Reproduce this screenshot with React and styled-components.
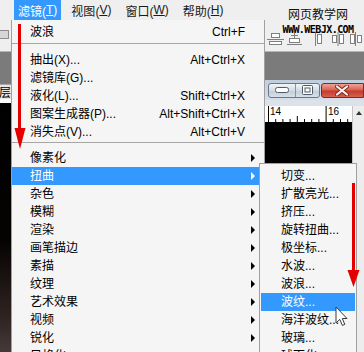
import React from 'react';
import styled, { createGlobalStyle } from 'styled-components';

const Global = createGlobalStyle`
  *, *::before, *::after { box-sizing: border-box; }
  html, body { margin: 0; padding: 0; background: #fff; }
  body { font-family: "Liberation Sans", "Noto Sans CJK SC", sans-serif; }
`;

const Screen = styled.div`
  position: relative;
  width: 364px;
  height: 352px;
  overflow: hidden;
  display: flex;
  flex-direction: column;
  background: #7b7b7b;
  font-family: "Liberation Sans", "Noto Sans CJK SC", sans-serif;
  font-size: 12px;
  color: #000;
`;

/* ---------- menubar ---------- */
const MenuBar = styled.div`
  flex: none;
  height: 20px;
  display: flex;
  align-items: stretch;
  gap: 6px;
  padding-left: 14px;
  background: #efefef;
`;

const BarItem = styled.div`
  display: flex;
  align-items: center;
  padding: 0 4px;
  white-space: nowrap;
  background: ${p => (p.$active ? '#3399ff' : 'transparent')};
  color: ${p => (p.$active ? '#fff' : '#1a1a1a')};
  u { text-decoration: underline; text-underline-offset: 1px; }
`;

/* ---------- toolbar ---------- */
const Toolbar = styled.div`
  flex: none;
  height: 32px;
  display: flex;
  justify-content: space-between;
  background: #efefef;
  border-bottom: 1px solid #b4b4b4;
`;

const Swatch = styled.div`
  width: 9px;
  height: 9px;
  margin-top: 10px;
  border: 1px solid #8c8c8c;
  border-left: none;
  background: #d6d6d6;
`;

const ToolIcons = styled.div`
  width: 99px;
  display: flex;
  align-items: flex-start;
  padding: 12px 0 0 2px;
  gap: 3px;
`;

const Watermark = styled.div`
  position: absolute;
  left: 282px;
  top: 8px;
  width: 72px;
  display: flex;
  flex-direction: column;
  align-items: center;
  gap: 5px;
  pointer-events: none;
`;

const WmTitle = styled.div`
  font-family: "Noto Sans CJK SC", sans-serif;
  font-size: 12px;
  line-height: 12px;
  color: #111;
`;

const WmUrl = styled.div`
  font-family: "DejaVu Sans Mono", monospace;
  font-weight: bold;
  font-size: 10px;
  line-height: 9px;
  letter-spacing: -0.55px;
  color: #000;
`;

/* ---------- workspace ---------- */
const Workspace = styled.div`
  flex: 1;
  display: flex;
  min-height: 0;
`;

const LeftPane = styled.div`
  width: 11px;
  display: flex;
  flex-direction: column;
`;

const PaneGray = styled.div`
  height: 32px;
  background: #7b7b7b;
`;

const PaneTab = styled.div`
  height: 15px;
  background: #e6e6e6;
  border-top: 1px solid #a8a8a8;
  display: flex;
  justify-content: flex-end;
  overflow: hidden;
  font-family: "Noto Sans CJK SC", sans-serif;
  font-size: 12px;
  line-height: 14px;
  white-space: nowrap;
`;

const PaneRule = styled.div`
  height: 4px;
  background: #fafafa;
`;

const PaneCanvas = styled.div`
  flex: 1;
  background: linear-gradient(#000 0%, #050302 55%, #2e2220 85%, #45393a 100%);
`;

const Middle = styled.div`
  flex: 1;
  background: #7b7b7b;
`;

const DocWindow = styled.div`
  width: 99px;
  margin-top: 28px;
  display: flex;
  flex-direction: column;
  background: #d6dee8;
`;

const TitleBar = styled.div`
  flex: none;
  height: 20px;
  display: flex;
  align-items: center;
  padding-left: 3px;
  background: linear-gradient(#bfcddd, #d5dfea);
`;

const CtrlGroup = styled.div`
  display: flex;
  height: 15px;
  border: 1px solid #67778c;
  border-radius: 3px;
  overflow: hidden;
  background: linear-gradient(#f2f5f8, #d3dbe4 50%, #c1ccd8 51%, #d8e0e8);
`;

const CtrlBtn = styled.div`
  width: ${p => p.$w}px;
  display: flex;
  align-items: center;
  justify-content: center;
  & + & { border-left: 1px solid #8593a4; }
`;

const CloseBtn = styled.div`
  width: 44px;
  height: 15px;
  margin-left: 1px;
  border: 1px solid #7c2a22;
  border-radius: 3px 0 0 3px;
  background: linear-gradient(#eea597, #d9604f 48%, #c53a2b 52%, #d8604f);
  display: flex;
  align-items: center;
  justify-content: center;
`;

const FrameGap = styled.div`
  flex: none;
  height: 6px;
  background: #dbe2ea;
`;

const RulerRow = styled.div`
  flex: none;
  height: 17px;
  display: flex;
`;

const Ruler = styled.div`
  flex: 1;
  background: #fff;
  border-bottom: 1px solid #000;
  svg { display: block; }
`;

const ScrollCol = styled.div`
  width: 12px;
  background: #ededed;
  border-left: 1px solid #c4c4c4;
  display: flex;
  justify-content: center;
  padding-top: ${p => (p.$top ? '5px' : '0')};
`;

const UpArrow = styled.div`
  width: 0;
  height: 0;
  border-left: 3.5px solid transparent;
  border-right: 3.5px solid transparent;
  border-bottom: 4px solid #333;
`;

const CanvasRow = styled.div`
  flex: 1;
  display: flex;
`;

const Canvas = styled.div`
  flex: 1;
  background: #000;
`;

/* ---------- menus ---------- */
const MainMenu = styled.div`
  position: absolute;
  left: 11px;
  top: 20px;
  width: 254px;
  padding-top: 3px;
  border: 1px solid #a0a0a0;
  border-top: none;
  background: #f5f5f5;
`;

const Row = styled.div`
  display: grid;
  grid-template-columns: 1fr auto 19px;
  align-items: center;
  height: 18px;
  padding-left: 18px;
  white-space: nowrap;
  line-height: 18px;
  background: ${p => (p.$active ? '#3399ff' : 'transparent')};
  color: ${p => (p.$active ? '#fff' : '#000')};
`;

const Label = styled.span`
  font-family: "Liberation Sans", "Noto Sans CJK SC", sans-serif;
`;

const Shortcut = styled.span``;

const ArrowCell = styled.span`
  display: flex;
  align-items: center;
  height: 18px;
`;

const Arrow = styled.span`
  display: block;
  width: 0;
  height: 0;
  margin-left: 6px;
  border-left: 4px solid currentColor;
  border-top: 4px solid transparent;
  border-bottom: 4px solid transparent;
`;

const Sep = styled.div`
  height: 1px;
  background: #a6a6a6;
  margin: ${p => (p.$tight ? '1px 0 6px' : '2px 0 7px')};
`;

const SubMenu = styled.div`
  position: absolute;
  left: 259px;
  top: 163px;
  width: 98px;
  padding: 3px 1px 0;
  border: 1px solid #a0a0a0;
  background: #f5f5f5;
`;

const SubRow = styled.div`
  height: 18px;
  line-height: 18px;
  padding-left: 20px;
  white-space: nowrap;
  background: ${p => (p.$active ? '#3399ff' : 'transparent')};
  color: ${p => (p.$active ? '#fff' : '#000')};
`;

const Overlay = styled.svg`
  position: absolute;
  left: 0;
  top: 0;
  pointer-events: none;
`;

const Cursor = styled.svg`
  position: absolute;
  left: 335px;
  top: 306px;
  pointer-events: none;
`;

/* ---------- data ---------- */
const mainItems = [
  { label: '波浪', sc: 'Ctrl+F' },
  { sep: true },
  { label: '抽出(X)...', sc: 'Alt+Ctrl+X' },
  { label: '滤镜库(G)...' },
  { label: '液化(L)...', sc: 'Shift+Ctrl+X' },
  { label: '图案生成器(P)...', sc: 'Alt+Shift+Ctrl+X' },
  { label: '消失点(V)...', sc: 'Alt+Ctrl+V' },
  { sep: true, tight: true },
  { label: '像素化', sub: true },
  { label: '扭曲', sub: true, active: true },
  { label: '杂色', sub: true },
  { label: '模糊', sub: true },
  { label: '渲染', sub: true },
  { label: '画笔描边', sub: true },
  { label: '素描', sub: true },
  { label: '纹理', sub: true },
  { label: '艺术效果', sub: true },
  { label: '视频', sub: true },
  { label: '锐化', sub: true },
  { label: '风格化', sub: true },
  { label: '其它', sub: true },
];

const subItems = [
  '切变...', '扩散亮光...', '挤压...', '旋转扭曲...', '极坐标...', '水波...',
  '波浪...', '波纹...', '海洋波纹...', '玻璃...', '球面化...',
];

const barItems = [
  { t: '滤镜', k: 'T', active: true },
  { t: '视图', k: 'V' },
  { t: '窗口', k: 'W' },
  { t: '帮助', k: 'H' },
];

const IconStroke = '#7f7f7f';

function AlignIcons() {
  return (
    <>
      <svg width="17" height="14" viewBox="0 0 17 14">
        <line x1="0" y1="7.5" x2="17" y2="7.5" stroke={IconStroke} />
        <rect x="4.5" y="1.5" width="8" height="4" fill="#fff" stroke={IconStroke} />
        <rect x="2.5" y="9.5" width="12" height="3" fill="#fff" stroke={IconStroke} />
      </svg>
      <svg width="15" height="14" viewBox="0 0 15 14">
        <line x1="0" y1="12.5" x2="15" y2="12.5" stroke={IconStroke} />
        <rect x="2.5" y="6.5" width="10" height="4" fill="#fff" stroke={IconStroke} />
        <line x1="7.5" y1="1" x2="7.5" y2="6" stroke={IconStroke} />
        <line x1="4" y1="3.5" x2="11" y2="3.5" stroke={IconStroke} />
      </svg>
      <svg width="10" height="14" viewBox="0 0 10 14" style={{ marginLeft: 9 }}>
        <line x1="1.5" y1="0" x2="1.5" y2="14" stroke={IconStroke} />
        <rect x="3.5" y="2.5" width="4" height="9" fill="#fff" stroke={IconStroke} />
      </svg>
      <svg width="16" height="14" viewBox="0 0 16 14" style={{ marginLeft: 3 }}>
        <line x1="8" y1="0" x2="8" y2="14" stroke={IconStroke} />
        <rect x="2.5" y="3.5" width="4" height="7" fill="#fff" stroke={IconStroke} />
        <rect x="9.5" y="2.5" width="4" height="9" fill="#fff" stroke={IconStroke} />
      </svg>
      <svg width="14" height="14" viewBox="0 0 14 14">
        <line x1="6.5" y1="0" x2="6.5" y2="14" stroke={IconStroke} />
        <rect x="1.5" y="2.5" width="4" height="9" fill="#fff" stroke={IconStroke} />
        <rect x="8.5" y="3.5" width="4" height="7" fill="#fff" stroke={IconStroke} />
      </svg>
    </>
  );
}

function RulerMarks() {
  const ticks = [];
  for (let k = -1; k < 13; k++) {
    const x = 3.5 + k * 7.2;
    const major = k % 8 === 0;
    const mid = k % 4 === 0 && !major;
    const h = major ? 16 : mid ? 6 : 3;
    ticks.push(<line key={k} x1={x} y1={16 - h} x2={x} y2={16} stroke="#000" strokeWidth="1" />);
  }
  return (
    <svg width="87" height="16" viewBox="0 0 87 16">
      {ticks}
      <text x="5" y="9" fontSize="10" fontFamily="Liberation Sans, sans-serif" fill="#000">14</text>
      <text x="63" y="9" fontSize="10" fontFamily="Liberation Sans, sans-serif" fill="#000">16</text>
    </svg>
  );
}

export default function App() {
  return (
    <Screen>
      <Global />
      <MenuBar>
        {barItems.map(b => (
          <BarItem key={b.t} $active={b.active}>
            {b.t}(<u>{b.k}</u>)
          </BarItem>
        ))}
      </MenuBar>

      <Toolbar>
        <Swatch />
        <ToolIcons>
          <AlignIcons />
        </ToolIcons>
      </Toolbar>

      <Workspace>
        <LeftPane>
          <PaneGray />
          <PaneTab>图层</PaneTab>
          <PaneRule />
          <PaneCanvas />
        </LeftPane>
        <Middle />
        <DocWindow>
          <TitleBar>
            <CtrlGroup>
              <CtrlBtn $w={27}>
                <svg width="14" height="6" viewBox="0 0 14 6">
                  <rect x="0.5" y="0.5" width="13" height="5" rx="2" fill="#fff" stroke="#4d5a6b" />
                </svg>
              </CtrlBtn>
              <CtrlBtn $w={24}>
                <svg width="11" height="10" viewBox="0 0 11 10">
                  <rect x="0.5" y="0.5" width="10" height="9" rx="1" fill="#fff" stroke="#4d5a6b" />
                  <rect x="3" y="3" width="5" height="4" fill="none" stroke="#4d5a6b" />
                </svg>
              </CtrlBtn>
            </CtrlGroup>
            <CloseBtn>
              <svg width="14" height="11" viewBox="0 0 14 11">
                <path d="M2 1.5 L12 9.5 M12 1.5 L2 9.5" stroke="#7a2a22" strokeWidth="4" strokeLinecap="round" />
                <path d="M2 1.5 L12 9.5 M12 1.5 L2 9.5" stroke="#fff2ee" strokeWidth="2.2" strokeLinecap="round" />
              </svg>
            </CloseBtn>
          </TitleBar>
          <FrameGap />
          <RulerRow>
            <Ruler>
              <RulerMarks />
            </Ruler>
            <ScrollCol $top>
              <UpArrow />
            </ScrollCol>
          </RulerRow>
          <CanvasRow>
            <Canvas />
            <ScrollCol />
          </CanvasRow>
        </DocWindow>
      </Workspace>

      <Watermark>
        <WmTitle>网页教学网</WmTitle>
        <WmUrl>WWW.WEBJX.COM</WmUrl>
      </Watermark>

      <MainMenu>
        {mainItems.map((it, i) =>
          it.sep ? (
            <Sep key={i} $tight={it.tight} />
          ) : (
            <Row key={i} $active={it.active}>
              <Label>{it.label}</Label>
              <Shortcut>{it.sc || ''}</Shortcut>
              <ArrowCell>{it.sub ? <Arrow /> : null}</ArrowCell>
            </Row>
          )
        )}
      </MainMenu>

      <SubMenu>
        {subItems.map(s => (
          <SubRow key={s} $active={s === '波纹...'}>
            {s}
          </SubRow>
        ))}
      </SubMenu>

      <Overlay width="364" height="352" viewBox="0 0 364 352">
        <rect x="18" y="24" width="3" height="106" fill="#e50000" />
        <polygon points="14.5,128 25.5,128 20,149" fill="#e50000" />
        <rect x="352" y="183" width="3" height="89" fill="#e50000" />
        <polygon points="347.5,270 359.5,270 353.5,287" fill="#e50000" />
      </Overlay>

      <Cursor width="13" height="21" viewBox="0 0 13 21">
        <path
          d="M1 1 L1 17 L4.8 13.4 L7.4 19.4 L9.8 18.4 L7.3 12.5 L12 12.5 Z"
          fill="#fff"
          stroke="#3a3a3a"
          strokeWidth="1"
          strokeLinejoin="round"
        />
      </Cursor>
    </Screen>
  );
}
